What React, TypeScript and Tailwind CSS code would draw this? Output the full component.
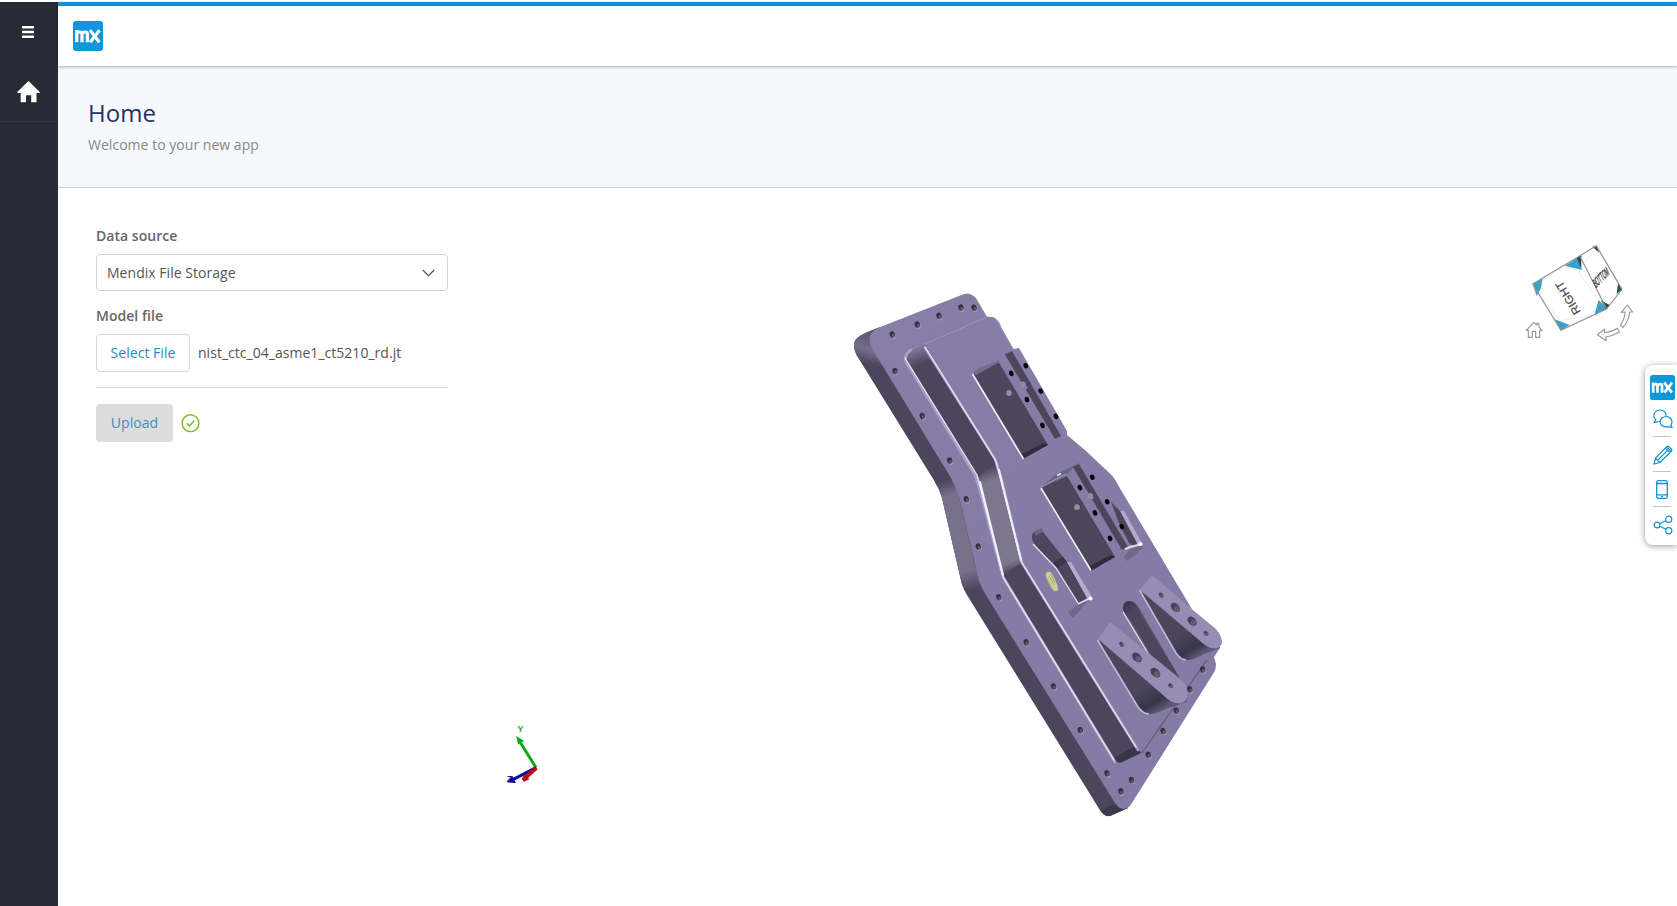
import React from "react";

type Pt = [number, number];

function MxLogo({ className }: { className: string }) {
  return (
    <svg viewBox="0 0 30 30" className={className}>
      <rect width="30" height="30" rx="3" fill="#0f97dc" />
      <g fill="none" stroke="#fff" strokeWidth="3.2">
        <path d="M3.800 21.300V9M3.800 13.200c.8-2.600 5.200-3.400 5.200.3V21.300M9 13.200c.8-2.600 5.400-3.400 5.400.3V21.300" />
        <path d="M17 9.200l9.300 12M26.500 9.200l-9.300 12" />
      </g>
    </svg>
  );
}

function Sidebar() {
  return (
    <aside className="flex w-[58px] shrink-0 flex-col bg-[#252c36]">
      <button className="flex h-[60px] items-center justify-center pr-0.5">
        <svg width="12" height="12" viewBox="0 0 12 12" fill="#fff">
          <path d="M0 0h12v2.6H0zM0 4.8h12v2.5H0zM0 9.5h12V12H0z" />
        </svg>
      </button>
      <a className="flex h-[60px] items-center justify-center border-b border-[#303743] pr-px">
        <svg width="23" height="22" viewBox="0 0 23 22" fill="#fff">
          <path d="M11.5 0L23 11.2l-.8.8h-2.7v9.2h-5.3v-7H9v7H3.7V12H.8L0 11.2z" />
        </svg>
      </a>
    </aside>
  );
}

const plateHoles: Pt[] = [
  [892.3, 334.5], [917.3, 324.5], [939, 315.8], [961, 307.5], [974, 307.7],
  [895, 371], [922.3, 416], [949.8, 460.5], [966.3, 499.3], [978.3, 546.5],
  [998.8, 597.2], [1026.2, 642.2], [1053.6, 686.4], [1080.3, 730], [1107, 773.3],
  [1121, 791.3], [1131.6, 780], [1148.3, 754.7], [1163, 731], [1176.3, 710.7],
  [1189.8, 689.3], [1202.7, 669.5],
];

const boltHoles: Pt[] = [
  [1025.8, 365.8], [1011.2, 373.4], [1040.8, 391], [1026.9, 399.5], [1056, 416.4], [1042.5, 425.4],
  [1092.3, 477.2], [1079.9, 487.6], [1107.2, 501.7], [1095, 512.9], [1121.8, 526.6], [1110, 538.4],
];

const dimples: Pt[] = [[1009, 393], [1023, 384.5], [1077, 507.2], [1090.3, 496]];

const bracketHoles: [number, number, number, number][] = [
  [1121.6, 644.3, 2.8, 1.9], [1137, 657.4, 5.8, 3.9], [1155.4, 672.7, 5.8, 3.9], [1170.6, 685.7, 2.8, 2],
  [1161.2, 595.1, 2.8, 1.9], [1175.4, 607.4, 5.4, 3.7], [1192.1, 621.1, 5.4, 3.7], [1206, 633.3, 2.8, 2],
];

function Model() {
  return (
    <svg viewBox="840 280 400 550" width="400" height="550" className="block">
      <defs>
        <linearGradient id="face" x1="0" y1="0" x2="1" y2="1">
          <stop offset="0" stopColor="#887fa9" />
          <stop offset=".5" stopColor="#857ca5" />
          <stop offset="1" stopColor="#837ba3" />
        </linearGradient>
        <linearGradient id="cornerTop" gradientUnits="userSpaceOnUse" x1="872" y1="330" x2="862" y2="362">
          <stop offset="0" stopColor="#5a5570" />
          <stop offset=".35" stopColor="#686280" />
          <stop offset=".6" stopColor="#756e8c" />
          <stop offset="1" stopColor="#4b465c" />
        </linearGradient>
        <linearGradient id="sideMid" gradientUnits="userSpaceOnUse" x1="940" y1="482" x2="972" y2="590">
          <stop offset="0" stopColor="#4b465c" />
          <stop offset=".14" stopColor="#77718b" />
          <stop offset=".82" stopColor="#77718b" />
          <stop offset="1" stopColor="#4b465c" />
        </linearGradient>
        <linearGradient id="grooveMid" gradientUnits="userSpaceOnUse" x1="982" y1="469" x2="1014" y2="572">
          <stop offset="0" stopColor="#4b465c" />
          <stop offset=".13" stopColor="#7c768f" />
          <stop offset=".9" stopColor="#7c768f" />
          <stop offset="1" stopColor="#4b465c" />
        </linearGradient>
        <linearGradient id="grooveTop" gradientUnits="userSpaceOnUse" x1="913" y1="345" x2="920" y2="365">
          <stop offset="0" stopColor="#8b83ab" />
          <stop offset="1" stopColor="#4b465c" />
        </linearGradient>
        <linearGradient id="bracketA" gradientUnits="userSpaceOnUse" x1="1140" y1="690" x2="1154" y2="714">
          <stop offset="0" stopColor="#4b465c" />
          <stop offset=".65" stopColor="#38344a" />
          <stop offset="1" stopColor="#5d5773" />
        </linearGradient>
        <linearGradient id="bracketB" gradientUnits="userSpaceOnUse" x1="1176" y1="638" x2="1190" y2="661">
          <stop offset="0" stopColor="#4b465c" />
          <stop offset=".65" stopColor="#38344a" />
          <stop offset="1" stopColor="#5d5773" />
        </linearGradient>
        <linearGradient id="slot" gradientUnits="userSpaceOnUse" x1="1123" y1="603" x2="1138" y2="618">
          <stop offset="0" stopColor="#393448" />
          <stop offset="1" stopColor="#57516a" />
        </linearGradient>
      </defs>

      {/* thick side wall */}
      <path
        d="M876 328.500C863 334 854 337 854 345Q854 352 859 359L935 482Q940 490 942 498L960 576Q962 587 967 595L1098 807Q1103 817 1110 816L1128 808L1100 740L985 585L955 480L880 330Z"
        fill="#4b465c"
      />
      <path d="M880 327L866 333Q854 338 854 345Q854 351 858 357L864 366L884 366L876 340Z" fill="url(#cornerTop)" />
      <path d="M935 482Q940 490 942 498L960 576Q961 584 965 591L984 586L976 570L958 492L952 479Z" fill="url(#sideMid)" />
      <path d="M1101 811Q1104 817 1110 816L1128 808L1124 802L1109 806Z" fill="#3d394c" />

      {/* top face */}
      <path
        d="M879 327.500L964 294Q970 292 976 298L987 317L993 317Q998 320 1001 328L1013 349L1019 348L1067 431V435L1086 451L1112 475.500Q1115 479 1118 485L1193 611L1214 630L1220 648L1214 657L1216 664Q1216 670 1213 674L1130 806Q1122 813 1115 803L989 600Q980 587 977 573L960 500Q957 490 951 478L876 355Q862 335 879 327.500Z"
        fill="url(#face)"
      />
      <path d="M1142 753L1207 660" stroke="#5e5876" strokeWidth="1.2" fill="none" />
      <path d="M925 344L987 317" stroke="#9a92b8" strokeWidth="1.2" fill="none" />
      <path d="M912 349L925 344M987 317L994 318Q999 321 1001 328L1013 349" stroke="#958db4" strokeWidth="1.2" fill="none" />

      {/* long groove */}
      <path d="M907 353L924 346L995 460L998 466L978 481L972 471L906 362Z" fill="#4b465c" />
      <path d="M906 355Q908 350 925 344L933 358L912 370Z" fill="url(#grooveTop)" />
      <path d="M978 478L996 462L1022 563L1003 577Z" fill="url(#grooveMid)" />
      <path d="M1003 575L1021 563L1141 753Q1130 758 1122 762Q1118 764 1114 759Z" fill="#4b465c" />
      <path d="M1113 758L1136 746L1141 753L1122 762Q1117 764 1113 758Z" fill="#3a364a" />
      <g fill="none" strokeLinecap="round" strokeLinejoin="round">
        <path d="M911 350Q904 354 906 362L975 475L979 487L1003 577L1115 762" stroke="#a9a1c5" strokeWidth="2.8" />
        <path d="M905 358L977 475L981 490L1003 577L1114 760" stroke="#ebe8f5" strokeWidth="1.3" />
        <path d="M925 348L995 459L1001 478L1022 563L1138 750" stroke="#a9a1c5" strokeWidth="2.6" />
        <path d="M925 347L996 461L1021 561L1136 747" stroke="#ebe8f5" strokeWidth="1.2" />
        <path d="M980 482L1003 575" stroke="#f1eff9" strokeWidth="2" />
        <path d="M999 470L1021 560" stroke="#f1eff9" strokeWidth="2" />
      </g>

      {/* upper pocket */}
      <path d="M973 374L998 361L1048 445L1023 458Z" fill="#4b465c" />
      <path d="M973 373L979 368L998 361L999 362.500L976 375Z" fill="#746d8e" />
      <path d="M1023 459L1048 445L1044 443L1022 454Z" fill="#302c3d" />
      <path d="M972.500 374L1023.500 459" stroke="#f2f0f9" strokeWidth="1.6" />
      <path d="M1005 354.500L1012 351L1061 436L1055 439Z" fill="#4b465c" />
      <path d="M1021 386L1025 384L1028 388L1024 391Z" fill="#857ca5" />

      {/* lower pocket */}
      <path d="M1041 487L1055 475L1081 462L1073 468L1066 475L1043 489Z" fill="#6a6484" />
      <path d="M1057 475.500L1061 473.500" stroke="#e8e5f3" strokeWidth="1.5" />
      <path d="M1041 488L1067 476L1115 557L1091 570Z" fill="#4b465c" />
      <path d="M1091 571L1115 557L1111 555L1090 566Z" fill="#302c3d" />
      <path d="M1041 488L1091 570.500" stroke="#f2f0f9" strokeWidth="1.6" />
      <path d="M1041 487L1066 474" stroke="#aaa2c6" strokeWidth="1" />
      <path d="M1073 467L1079 464L1128 547L1122 550Z" fill="#4b465c" />
      <path d="M1088 496L1092 494L1094 498L1090 501Z" fill="#857ca5" />

      {/* right rib */}
      <path d="M1111 502L1122 513L1138 543L1135 547L1129 543L1119 523Z" fill="#4b465c" />
      <path d="M1120 511L1124 511L1142 543L1138 545Z" fill="#b1a9cf" />
      <path d="M1124 557L1129 550L1141 545L1143 548L1127 561Z" fill="#6f6888" />
      <path d="M1125 549L1130 547L1142 544" stroke="#ded9ee" strokeWidth="2" fill="none" />
      <circle cx="1140.500" cy="544" r="2" fill="#fff" />

      {/* centre slot with rib */}
      <path d="M1032 535Q1033 531 1041 529L1043 532L1067 562L1088 598L1079 603L1056 568L1036 546Q1031 540 1032 535Z" fill="#4b465c" />
      <path d="M1034 532L1042 528L1043 532L1036 536Z" fill="#686180" />
      <path d="M1057 568L1067 562L1063 557L1053 563Z" fill="#393448" />
      <path d="M1033 544L1056 568L1078 603" stroke="#ded9ee" strokeWidth="1.400" fill="none" />
      <path d="M1067 562L1071 562L1092 597L1088 600Z" fill="#b4acd0" />
      <path d="M1068 612L1079 604L1088 601L1073 618Z" fill="#6f6888" />
      <path d="M1078 604L1090 598" stroke="#ded9ee" strokeWidth="1.500" />
      <circle cx="1090.500" cy="598.500" r="2" fill="#fff" />
      <path d="M1046 573Q1050 569 1054 577Q1058 585 1058 590Q1055 594 1050 586Q1045 577 1046 573Z" fill="#ccce92" />
      <path d="M1049 576L1054 585M1046 578L1052 588M1051 574L1055 583" stroke="#918c78" strokeWidth=".6" />

      {/* rounded long slot */}
      <path d="M1123 610Q1122 602 1128 601Q1134 600 1139 608L1182 682L1168 684L1126 615Z" fill="url(#slot)" />
      <path d="M1129 616L1138 611L1182 682L1168 684Z" fill="#4b465c" />
      <path d="M1123 612L1149 655" stroke="#e6e2f2" strokeWidth="1.200" />

      {/* brackets */}
      <path d="M1097 639L1184 694L1187 702L1168 708Q1156 714 1150 714Q1143 714 1138 706Z" fill="url(#bracketA)" />
      <path d="M1098 639L1110 622L1146 651L1183 681Q1189 689 1187 697Q1185 705 1176 703Q1170 702 1163 695Z" fill="#958db4" />
      <path d="M1097.500 640L1138 707Q1143 714 1149 714" stroke="#c2bbda" strokeWidth="1.500" fill="none" />
      <path d="M1139 590L1214 638L1220 648L1202 655Q1192 661 1186 660Q1181 660 1176 653Z" fill="url(#bracketB)" />
      <path d="M1140 590L1152 575L1194 611L1216 629Q1222 636 1222 643Q1220 650 1211 648Q1205 646 1199 640Z" fill="#958db4" />
      <path d="M1139.500 590L1176 653Q1181 660 1186 660" stroke="#c2bbda" strokeWidth="1.500" fill="none" />

      {bracketHoles.map(([x, y, a, b]) => (
        <g key={`${x}-${y}`} transform={`rotate(45 ${x} ${y})`}>
          <ellipse cx={x} cy={y} rx={a} ry={b} fill="#474157" />
          <ellipse cx={x + a * 0.35} cy={y} rx={a * 0.5} ry={b * 0.75} fill="#625c75" />
        </g>
      ))}
      {plateHoles.map(([x, y]) => (
        <g key={`${x}-${y}`}>
          <ellipse cx={x + 1} cy={y + 1.6} rx="2.400" ry="3" fill="#a098bd" />
          <ellipse cx={x} cy={y} rx="2.600" ry="3.200" transform={`rotate(-20 ${x} ${y})`} fill="#353142" />
          <ellipse cx={x + 0.8} cy={y + 1} rx="1.300" ry="1.800" fill="#615c70" />
        </g>
      ))}
      {boltHoles.map(([x, y]) => (
        <ellipse key={`${x}-${y}`} cx={x} cy={y} rx="2.200" ry="2.800" transform={`rotate(-25 ${x} ${y})`} fill="#030208" />
      ))}
      {dimples.map(([x, y]) => (
        <ellipse key={`${x}-${y}`} cx={x} cy={y} rx="2.800" ry="2.900" fill="#928bab" />
      ))}
    </svg>
  );
}

function ViewCube() {
  return (
    <svg viewBox="0 0 420 360" width="140" height="120" className="block" strokeLinejoin="round">
      <path d="M68 147L212 64L290 222L153 286Z" fill="#fff" />
      <path d="M212 64L259 32L336 163L290 222Z" fill="#fff" />
      <g fill="none" stroke="#e4e4e4" strokeWidth="2">
        <path d="M92 183L150 256L262 240M97 135L165 95L203 108L266 195M92 183L97 135M179 270L262 235M222 82L250 52M268 53L325 148M218 100L272 196M296 208L320 177" />
      </g>
      <g fill="#3b9fca">
        <path d="M68 147L98 130L92 162L80 183Z" />
        <path d="M164 92L203 68L216 105Z" />
        <path d="M134 253L179 270L153 286Z" />
        <path d="M266 195L290 222L253 240Z" />
      </g>
      <g fill="#244960">
        <path d="M200 68L214 61L214 101Z" />
        <path d="M247 35L259 32L268 53Z" />
        <path d="M324 145L336 163L320 177Z" />
        <path d="M272 196L299 210L288 223Z" />
      </g>
      <path d="M68 147L205 65L259 32L336 163L290 222L153 286ZM211 66L290 222" fill="none" stroke="#929292" strokeWidth="3.500" />
      <text
        transform="translate(213 230) rotate(-121.5)"
        fontFamily="Liberation Sans, sans-serif"
        fontSize="34"
        textLength="111"
        lengthAdjust="spacingAndGlyphs"
        fill="#484848"
        stroke="#484848"
        strokeWidth=".6"
      >
        RIGHT
      </text>
      <text
        transform="matrix(.64 -.66 .5 1.05 257 160)"
        fontFamily="Liberation Sans, sans-serif"
        fontSize="31"
        textLength="66"
        lengthAdjust="spacingAndGlyphs"
        fill="#303030"
        stroke="#303030"
        strokeWidth="1"
      >
        BOTTOM
      </text>
      <g fill="#fff" stroke="#999" strokeWidth="3.500">
        <path d="M49 286L71 262L81 270V265H87V276L96 286H89V307H77V289H67V307H55V286Z" />
        <path d="M352 210L368 231L359 231Q357 257 339 277L331 271Q345 250 345 231L334 232Z" />
        <path d="M262 299L284 282L283 293Q305 291 322 280L328 291Q310 302 287 306L289 317Z" />
      </g>
    </svg>
  );
}

function AxisTriad() {
  return (
    <svg viewBox="0 0 210 270" width="70" height="90" className="block">
      <text x="81.500" y="66" fontFamily="Liberation Sans, sans-serif" fontSize="28" fontWeight="bold" fill="#20a82c">Y</text>
      <path d="M138 173L92 99" stroke="#08a91a" strokeWidth="9" />
      <path d="M79 78L102 93L84 104Z" fill="#08a91a" />
      <text x="50" y="217" fontFamily="Liberation Sans, sans-serif" fontSize="28" fontWeight="bold" fill="#1b1b9e">Z</text>
      <path d="M138 173L70 208" stroke="#0b0ba0" strokeWidth="9" />
      <path d="M51 217L67 198L78 219Z" fill="#0b0ba0" />
      <path d="M139 173L106 203" stroke="#b80d16" strokeWidth="12" />
      <path d="M95 207L104 191L118 208L102 215Z" fill="#b80d16" />
    </svg>
  );
}

function FeedbackPanel() {
  const cell = "flex w-[18px] items-center justify-center";
  return (
    <div className="absolute top-[365px] right-0 flex h-[180px] w-8 flex-col items-center rounded-l-lg bg-white pt-[10px] shadow-[0_1px_6px_rgba(0,0,0,0.4)]">
      <MxLogo className="ml-[3px] h-[25px] w-[25px] shrink-0" />
      <div className="ml-0.5 flex flex-col items-center text-[#1191cf]">
        <div className={`${cell} h-[37px] border-b border-[#c9c2bd]`}>
          <svg width="20" height="20" viewBox="0 0 20 20" fill="none" stroke="currentColor" strokeWidth="1.200" className="mt-0.5 ml-0.5 shrink-0">
            <path d="M7.200 12.500L1.200 13.500L2.600 10.600C-1 7 1.500 1 7 1C11 1 13.500 4 13 7.300" />
            <path d="M13.200 7.500C9.700 7.500 7.200 9.800 7.200 12.700C7.200 16.700 11 18.700 15 17.700L19 18.500L17.800 16C20.600 12.500 18 7.500 13.200 7.500Z" />
          </svg>
        </div>
        <div className={`${cell} h-[35px] border-b border-[#c9c2bd]`}>
          <svg width="20" height="20" viewBox="0 0 20 20" fill="none" stroke="currentColor" strokeWidth="1.200" className="mt-0.5 ml-0.5 shrink-0">
            <path d="M1 19L2.500 13L14 1.500Q15 .7 16 1.700L18.300 4Q19.300 5 18.500 6L7 17.500ZM2.500 13L7 17.500M12.500 3L17 7.500M13.700 1.800L18.200 6.300M4.800 15.200L14.700 5.200" />
          </svg>
        </div>
        <div className={`${cell} h-[35px] border-b border-[#c9c2bd]`}>
          <svg width="12" height="19" viewBox="0 0 12 19" fill="none" stroke="currentColor" strokeWidth="1.300" className="shrink-0">
            <rect x=".7" y=".7" width="10.600" height="17.600" rx="1.800" />
            <path d="M.7 3.500H11.300M.7 14.800H11.300M5 16.600H7" />
          </svg>
        </div>
        <div className={`${cell} h-[35px]`}>
          <svg width="20" height="20" viewBox="0 0 20 20" fill="none" stroke="currentColor" strokeWidth="1.200" className="ml-0.5 shrink-0">
            <circle cx="4" cy="10" r="2.900" />
            <circle cx="15.700" cy="4.300" r="3.100" />
            <circle cx="15.700" cy="15.700" r="3.100" />
            <path d="M6.700 8.700L12.900 5.700M6.700 11.300L12.900 14.300" />
          </svg>
        </div>
      </div>
    </div>
  );
}

export default function App() {
  return (
    <div className="relative flex h-[906px] w-[1677px] flex-col overflow-hidden bg-white pt-0.5 font-['Open_Sans',sans-serif] text-sm tracking-[0.03px] text-[#555]">
      <div className="flex flex-1">
        <Sidebar />
        <div className="flex min-w-0 flex-1 flex-col">
          <header className="z-10 flex h-[64px] items-center border-t-4 border-[#0f92d8] bg-white pl-[15px] shadow-[0_1px_3px_rgba(0,0,0,0.32)]">
            <MxLogo className="h-[30px] w-[30px]" />
          </header>
          <section className="h-[122px] border-b border-[#ced0d3] bg-[#f5f8fd] pt-[29px] pl-[30px]">
            <h1 className="text-2xl leading-[36px] text-[#243265]">Home</h1>
            <p className="mt-[4px] leading-5 text-[#888]">Welcome to your new app</p>
          </section>
          <main className="flex flex-1 pl-[38px]">
            <div className="w-[352px] pt-[37px]">
              <div className="h-[29px] leading-[22px] font-semibold text-[#666]">Data source</div>
              <div className="flex h-[37px] items-center justify-between rounded border border-[#d3d3d3] pr-[12px] pl-[10px]">
                <span>Mendix File Storage</span>
                <svg width="13" height="8" viewBox="0 0 13 8" fill="none" stroke="#555" strokeWidth="1.300">
                  <path d="M.8 1L6.500 6.700L12.200 1" />
                </svg>
              </div>
              <div className="mt-[14px] h-[29px] leading-[22px] font-semibold text-[#666]">Model file</div>
              <div className="flex items-center gap-2">
                <button className="h-[38px] w-[94px] rounded border border-[#d7d7d7] text-[#2889c6]">Select File</button>
                <span>nist_ctc_04_asme1_ct5210_rd.jt</span>
              </div>
              <div className="mt-[15px] border-t border-[#d7d7d7]" />
              <div className="mt-4 flex items-center gap-[7.5px]">
                <button className="h-[38px] w-[77px] rounded bg-[#ddd] text-[#3d8dc6]">Upload</button>
                <svg width="19" height="19" viewBox="0 0 19 19" fill="none" stroke="#76bd1d">
                  <circle cx="9.500" cy="9.200" r="8.400" strokeWidth="1.400" />
                  <path d="M5.800 9.200L8.500 12L13.300 6.400" strokeWidth="1.500" />
                </svg>
              </div>
            </div>
            <div className="relative flex-1">
              <div className="absolute top-[522px] left-[42px]">
                <AxisTriad />
              </div>
              <div className="absolute top-[92px] left-[392px]">
                <Model />
              </div>
              <div className="absolute top-[47px] left-[1062px]">
                <ViewCube />
              </div>
            </div>
          </main>
        </div>
      </div>
      <FeedbackPanel />
    </div>
  );
}
